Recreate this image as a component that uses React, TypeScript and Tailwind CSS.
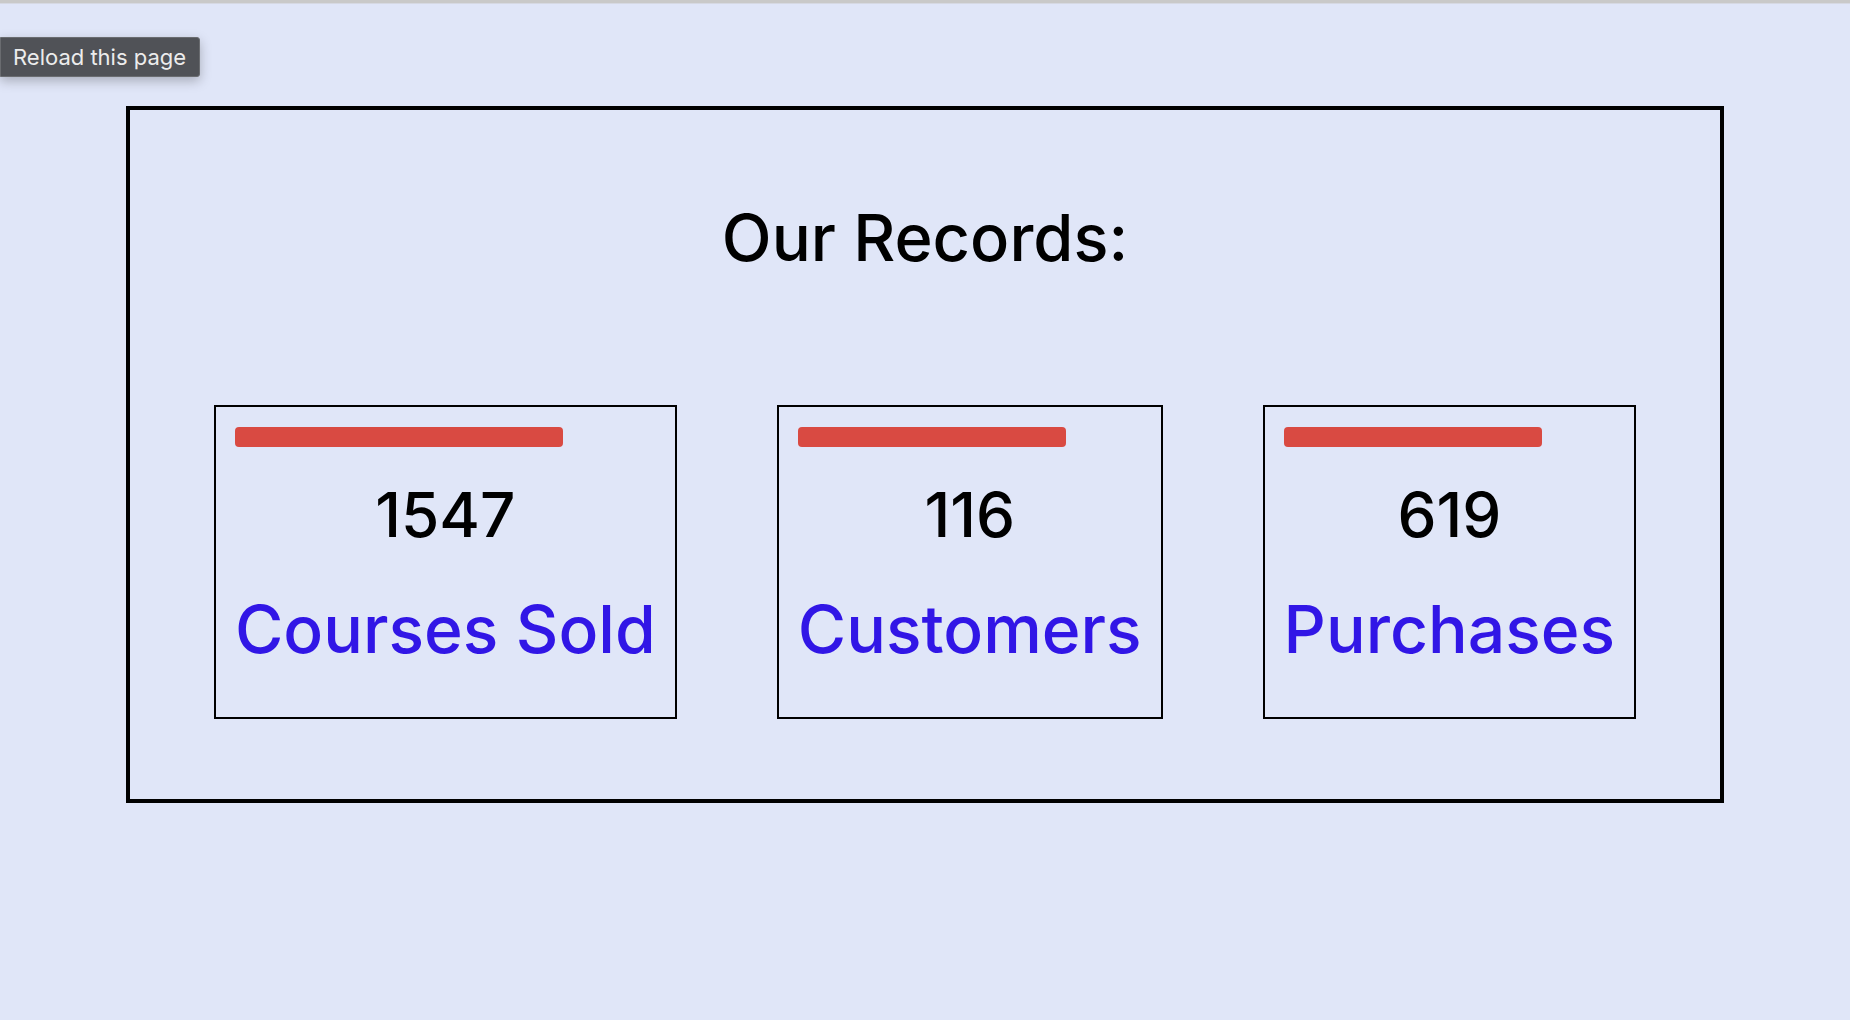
const stats = [
  { value: '1547', label: 'Courses Sold' },
  { value: '116', label: 'Customers' },
  { value: '619', label: 'Purchases' },
];

function StatCard({ value, label }: { value: string; label: string }) {
  return (
    <div className="border-2 border-black pt-5 px-[19px] pb-[55px] text-center">
      <div className="h-5 w-[78%] rounded-[4px] bg-[#d94a42]" />
      <div className="mt-[37px] text-[62px] leading-none font-medium text-black">{value}</div>
      <div className="mt-[50px] text-[66px] leading-none font-medium text-[#3116e6] whitespace-nowrap">
        {label}
      </div>
    </div>
  );
}

export default function App() {
  return (
    <div className="relative min-h-screen bg-[#e0e6f8] font-['Inter',sans-serif]">
      {/* browser chrome edge */}
      <div className="h-[4px] bg-[#c9c9c9] border-b border-[#d6d9e3]" />

      {/* tooltip */}
      <div className="absolute left-0 top-[37px] h-[40px] w-[200px] flex items-center pl-3 bg-[#505257] border border-[#6a6c70] rounded-r-[3px] shadow-[0_4px_12px_rgba(0,0,0,0.25)]">
        <span className="text-[22px] leading-none text-[#ececec]">Reload this page</span>
      </div>

      <div className="pt-[102px]">
        <section className="mx-auto w-[1598px] border-4 border-black pt-[95px] pb-[80px]">
          <h1 className="text-center text-[65px] leading-none font-medium text-black">Our Records:</h1>
          <div className="mt-[135px] flex justify-center gap-[100px]">
            {stats.map((s) => (
              <StatCard key={s.label} value={s.value} label={s.label} />
            ))}
          </div>
        </section>
      </div>
    </div>
  );
}
